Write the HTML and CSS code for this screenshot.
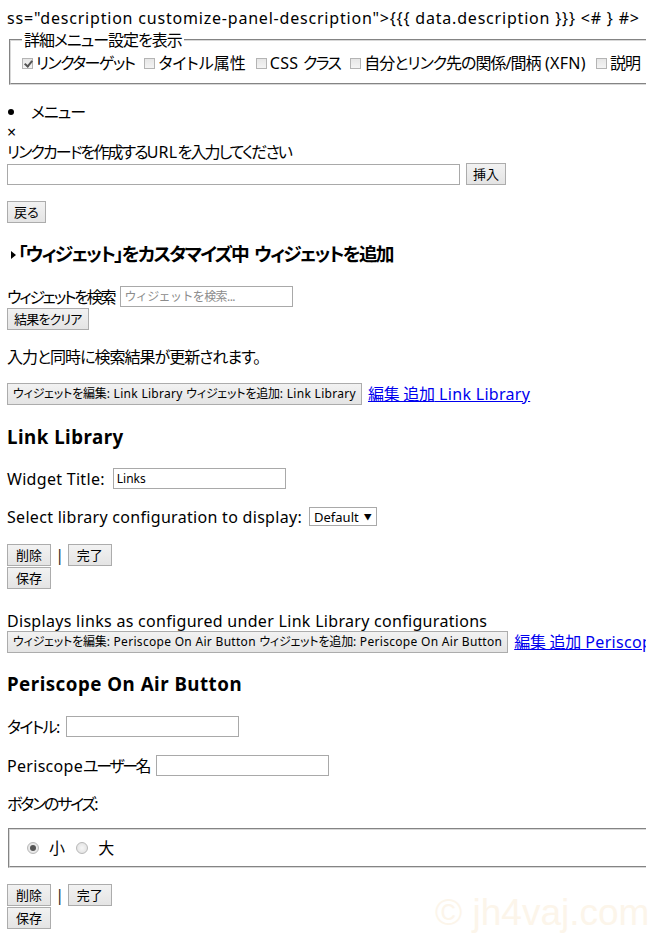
FILE: index.html
```html
<!DOCTYPE html>
<html lang="ja">
<head>
<meta charset="utf-8">
<title>カスタマイズ</title>
<link rel="stylesheet" href="styles.css">
</head>
<body>
<div class="page">
  <div class="line line1">ss="description customize-panel-description"&gt;{{{ data.description }}} &lt;# } #&gt;</div>

  <fieldset class="opts">
    <legend class="j">詳細メニュー設定を表示</legend>
    <div class="checks">
      <label class="chk"><input type="checkbox" checked><span class="jk">リンクターゲット</span></label>
      <label class="chk"><input type="checkbox"><span class="j0">タイトル属性</span></label>
      <label class="chk"><input type="checkbox"><span>CSS <span class="jk">クラス</span></span></label>
      <label class="chk"><input type="checkbox"><span><span class="j">自分とリンク先の関係/間柄</span> (XFN)</span></label>
      <label class="chk"><input type="checkbox"><span class="j">説明</span></label>
    </div>
  </fieldset>

  <ul class="menu"><li><span class="j">メニュー</span></li></ul>
  <div class="line">×</div>
  <div class="line"><span class="jk2">リンクカードを作成する</span>URL<span class="jk2">を入力してください</span></div>
  <div class="row urlrow">
    <input class="txt url" type="text">
    <button class="btn">挿入</button>
  </div>

  <div class="back"><button class="btn">戻る</button></div>

  <h3 class="h-cust"><span class="tri"></span><span class="jh">「ウィジェット」をカスタマイズ中 ウィジェットを追加</span></h3>

  <div class="row search">
    <span class="lbl jx">ウィジェットを検索</span>
    <input class="txt w172 ph" type="text" placeholder="ウィジェットを検索...">
  </div>
  <div><button class="btn tight">結果をクリア</button></div>

  <p class="para j">入力と同時に検索結果が更新されます。</p>

  <div class="widgetrow">
    <button class="btn small"><span class="jb">ウィジェットを編集</span>: Link Library <span class="jb">ウィジェットを追加</span>: Link Library</button>
    <a href="#" class="lnk"><span class="jl">編集 追加</span> Link Library</a>
  </div>

  <h3 class="h-widget h-ll">Link Library</h3>

  <div class="row field f-title">
    <span class="lbl">Widget Title:</span>
    <input class="txt w172 val" type="text" value="Links">
  </div>
  <div class="row field f-select">
    <span class="lbl">Select library configuration to display:</span>
    <span class="select">Default<span class="arrow">▼</span></span>
  </div>

  <div class="actions a1">
    <div class="arow"><button class="btn">削除</button><span class="sep">|</span><button class="btn">完了</button></div>
    <div class="arow2"><button class="btn">保存</button></div>
  </div>

  <div class="line desc">Displays links as configured under Link Library configurations</div>
  <div class="widgetrow w2">
    <button class="btn small"><span class="jb">ウィジェットを編集</span>: Periscope On Air Button <span class="jb">ウィジェットを追加</span>: Periscope On Air Button</button>
    <a href="#" class="lnk"><span class="jl">編集 追加</span> Periscope On Air Button</a>
  </div>

  <h3 class="h-widget h-pe">Periscope On Air Button</h3>

  <div class="row field f-t2">
    <span class="lbl jk">タイトル:</span>
    <input class="txt w172" type="text">
  </div>
  <div class="row field f-user">
    <span class="lbl">Periscope<span class="jy">ユーザー名</span></span>
    <input class="txt w172" type="text">
  </div>
  <div class="line size jx">ボタンのサイズ:</div>

  <fieldset class="radios">
    <label class="rad"><input type="radio" name="sz" checked>小</label>
    <label class="rad"><input type="radio" name="sz">大</label>
  </fieldset>

  <div class="actions a2">
    <div class="arow"><button class="btn">削除</button><span class="sep">|</span><button class="btn">完了</button></div>
    <div class="arow2"><button class="btn">保存</button></div>
  </div>
</div>
<div class="watermark">© jh4vaj.com</div>
</body>
</html>
```

FILE: styles.css
```css
html {
  overflow: hidden;
}
body {
  margin: 8px 7px;
  font-family: "Noto Sans", "Noto Sans CJK JP", sans-serif;
  font-feature-settings: "palt";
  font-size: 16px;
  line-height: 20px;
  letter-spacing: 0.3px;
  color: #000;
  background: #fff;
}
.page {
  width: 780px;
}
.line {
  white-space: nowrap;
}
.line1 {
  letter-spacing: 0.8px;
}
/* Japanese runs: narrower, like the condensed UI font of the original */
.j {
  letter-spacing: -1px;
}
.j0 {
  letter-spacing: 0;
}
.jk {
  letter-spacing: -1.6px;
}
.jk2 {
  letter-spacing: -1.9px;
}
.jx {
  letter-spacing: -2.2px;
}
.jy {
  letter-spacing: -2.4px;
}
.jh {
  letter-spacing: -1.75px;
  word-spacing: 3px;
}
.jb {
  letter-spacing: -0.2px;
}
.jl {
  letter-spacing: -0.3px;
}
/* fieldset with checkboxes */
.opts {
  margin: 2px 0 0 2px;
  padding: 3px 10px 10px 11px;
  border: 2px groove #d8d8d8;
}
.opts legend {
  padding: 0 2px;
  line-height: 20px;
}
.checks {
  display: flex;
  gap: 10px;
  white-space: nowrap;
}
.chk, .rad {
  display: inline-flex;
  align-items: center;
}
.chk input {
  appearance: none;
  width: 11px;
  height: 11px;
  margin: 0 3px 0 0;
  border: 1px solid #b4b4b4;
  background: linear-gradient(#e6e6e6, #f4f4f4);
  position: relative;
}
.chk input:checked::after {
  content: "";
  position: absolute;
  left: 3px;
  top: 0px;
  width: 3px;
  height: 6px;
  border: solid #555;
  border-width: 0 2px 2px 0;
  transform: rotate(40deg);
}
/* list */
.menu {
  margin: 17px 0 0;
  padding: 0;
  list-style: none;
}
.menu li::before {
  content: "";
  display: inline-block;
  width: 6px;
  height: 6px;
  border-radius: 50%;
  background: #000;
  margin: 0 17px 3px 1px;
  vertical-align: middle;
}
.row {
  display: flex;
  align-items: center;
  white-space: nowrap;
}
.urlrow {
  margin-top: 1px;
  gap: 6px;
  align-items: flex-start;
}
.txt {
  box-sizing: border-box;
  height: 21px;
  border: 1px solid #a9a9a9;
  padding: 1px 3px;
  font-family: "Noto Sans", "Noto Sans CJK JP", sans-serif;
  font-size: 12px;
  letter-spacing: 0;
  background: #fff;
  outline: none;
}
.url {
  width: 453px;
  margin-top: 1px;
}
.w172 {
  width: 173px;
}
.ph::placeholder {
  color: #8c8c8c;
  letter-spacing: -0.6px;
}
.btn {
  box-sizing: border-box;
  height: 22px;
  padding: 0 6px;
  border: 1px solid #acacac;
  border-radius: 0;
  background: linear-gradient(#f2f2f2, #e4e4e4);
  font-family: "Noto Sans", "Noto Sans CJK JP", sans-serif;
  font-feature-settings: "palt";
  font-size: 13px;
  letter-spacing: 0;
  color: #000;
  line-height: 18px;
  white-space: nowrap;
  vertical-align: top;
}
.btn.tight {
  letter-spacing: -0.8px;
}
.btn.small {
  font-size: 12px;
  padding: 0 5px;
  letter-spacing: 0.3px;
}
.back {
  margin-top: 16px;
}
h3 {
  font-size: 18.72px;
  line-height: 22px;
  font-weight: bold;
  letter-spacing: 0.5px;
  margin: 0;
  white-space: nowrap;
}
.h-cust {
  margin: 20px 0 21px;
}
.tri {
  display: inline-block;
  width: 0;
  height: 0;
  border-left: 5px solid #000;
  border-top: 4px solid transparent;
  border-bottom: 4px solid transparent;
  margin: 0 2px 2px 4px;
  vertical-align: middle;
}
.search {
  gap: 6px;
}
.search + div {
  margin-top: 1px;
}
.para {
  margin: 17px 0 16px;
}
.widgetrow {
  display: flex;
  align-items: center;
  gap: 6px;
  white-space: nowrap;
}
.lnk {
  color: #0000ee;
  text-decoration: underline;
}
.h-widget {
  margin: 21px 0 20px;
}
.field {
  gap: 7px;
}
.f-title {
  gap: 8px;
}
.val {
  color: #000;
}
.f-select {
  margin-top: 17px;
  height: 21px;
}
.select {
  display: inline-flex;
  align-items: center;
  box-sizing: border-box;
  height: 19px;
  margin-left: 0;
  padding: 0 4px 0 4px;
  border: 1px solid #a9a9a9;
  font-size: 13px;
  letter-spacing: 0;
  background: #fff;
}
.arrow {
  font-size: 8px;
  margin-left: 5px;
}
.actions {
  margin-top: 17px;
}
.arow {
  display: flex;
  align-items: center;
}
.arow .btn,
.arow2 .btn {
  padding: 0 8px;
}
.sep {
  margin: 0 3px 0 4px;
  color: #303030;
  font-size: 17px;
}
.arow2 {
  margin-top: 1px;
}
.desc {
  margin-top: 22px;
}
.h-pe {
  margin: 20px 0 21px;
}
.f-user {
  margin-top: 18px;
}
.size {
  margin-top: 18px;
}
.radios {
  margin: 14px 0 0 1px;
  padding: 8px 17px;
  border: 2px groove #d8d8d8;
  display: flex;
  gap: 11px;
}
.rad input {
  appearance: none;
  width: 12px;
  height: 12px;
  border-radius: 50%;
  margin: 0 10px 0 0;
  border: 1px solid #b8b8b8;
  background: radial-gradient(#f6f6f6, #dedede);
  position: relative;
}
.rad input:checked::after {
  content: "";
  position: absolute;
  left: 2px;
  top: 2px;
  width: 6px;
  height: 6px;
  border-radius: 50%;
  background: #555;
}
.a2 {
  margin-top: 16px;
}
.watermark {
  position: absolute;
  left: 435px;
  top: 893px;
  font-family: "Liberation Sans", sans-serif;
  font-size: 37px;
  line-height: 40px;
  letter-spacing: 0;
  color: #fcf5ea;
  white-space: nowrap;
  pointer-events: none;
}
```
